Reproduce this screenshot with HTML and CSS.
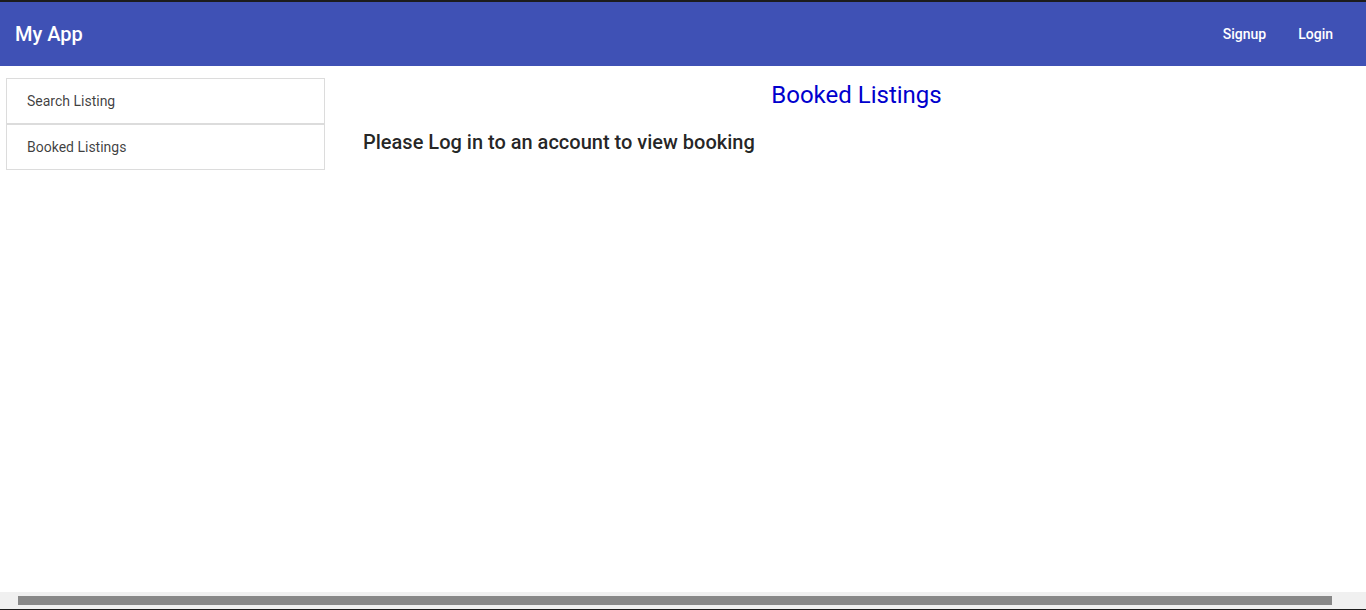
FILE: index.html
```html
<!DOCTYPE html>
<html lang="en">
<head>
<meta charset="utf-8">
<title>My App</title>
<link rel="stylesheet" href="styles.css">
</head>
<body>
<div class="topline"></div>
<header class="appbar">
  <div class="brand">My App</div>
  <nav class="actions">
    <a class="btn">Signup</a>
    <a class="btn">Login</a>
  </nav>
</header>
<div class="layout">
  <aside class="sidebar">
    <div class="nav-item">Search Listing</div>
    <div class="nav-item">Booked Listings</div>
  </aside>
  <main class="content">
    <h1 class="title">Booked Listings</h1>
    <p class="message">Please Log in to an account to view booking</p>
  </main>
</div>
<div class="hscroll"><div class="thumb"></div></div>
<div class="bottomline"></div>
</body>
</html>
```
FILE: styles.css
```css
* { box-sizing: border-box; }
html, body { margin: 0; padding: 0; }
body {
  height: 100vh;
  display: flex;
  flex-direction: column;
  font-family: Roboto, "Liberation Sans", Arial, sans-serif;
  background: #fff;
  overflow: hidden;
}
.topline { height: 2px; background: #1c1c1c; flex: none; }
.appbar {
  flex: none;
  height: 64px;
  background: #3f51b5;
  color: #fff;
  display: flex;
  align-items: center;
  justify-content: space-between;
  padding: 0 17px 0 15px;
}
.brand { font-size: 20px; font-weight: 500; line-height: 1.6; }
.actions { display: flex; }
.btn {
  font-size: 14px;
  font-weight: 500;
  padding: 6px 16px;
  line-height: 24px;
  color: #fff;
  cursor: pointer;
}
.layout {
  flex: 1;
  display: flex;
  align-items: flex-start;
  min-height: 0;
}
.sidebar {
  width: 319px;
  margin: 12px 22px 0 6px;
  flex: none;
}
.nav-item {
  border: 1px solid #dcdcdc;
  padding: 12px 20px;
  font-size: 14px;
  line-height: 20px;
  color: rgba(0, 0, 0, 0.76);
}
.content {
  flex: 1;
  padding: 15px 16px 0;
}
.title {
  margin: 0;
  text-align: center;
  font-size: 24px;
  font-weight: 400;
  line-height: 28px;
  color: #0000cd;
}
.message {
  margin: 17px 0 0;
  font-size: 20px;
  font-weight: 500;
  line-height: 32px;
  color: rgba(0, 0, 0, 0.87);
}
.hscroll {
  flex: none;
  height: 17px;
  background: #f0f0f0;
  padding: 4px 34px 4px 18px;
}
.thumb { height: 9px; background: #888; }
.bottomline { flex: none; height: 1px; background: #1c1c1c; }
```
